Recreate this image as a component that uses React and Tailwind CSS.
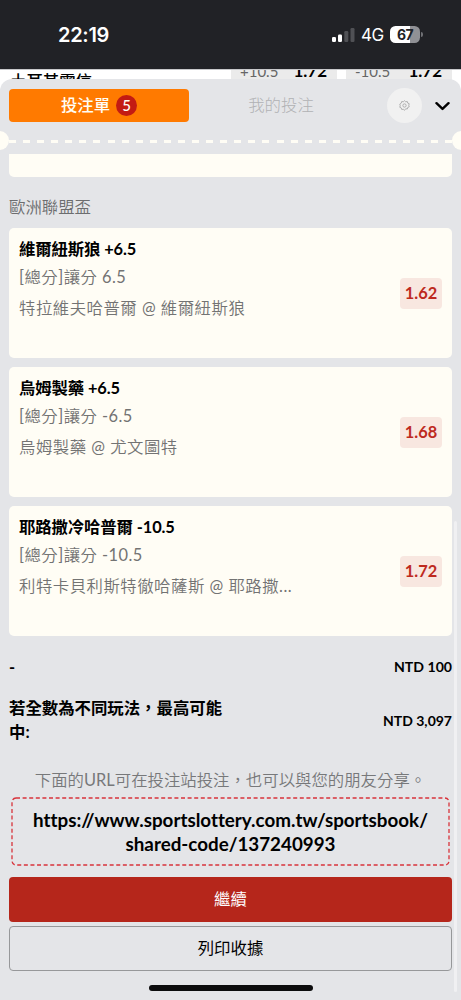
import React from "react";

const bets = [
  {
    id: 1,
    pick: "維爾紐斯狼 +6.5",
    market: "[總分]讓分 6.5",
    match: "特拉維夫哈普爾 @ 維爾紐斯狼",
    odds: "1.62",
  },
  {
    id: 2,
    pick: "烏姆製藥 +6.5",
    market: "[總分]讓分 -6.5",
    match: "烏姆製藥 @ 尤文圖特",
    odds: "1.68",
  },
  {
    id: 3,
    pick: "耶路撒冷哈普爾 -10.5",
    market: "[總分]讓分 -10.5",
    match: "利特卡貝利斯特徹哈薩斯 @ 耶路撒...",
    odds: "1.72",
  },
];

// Demi-light Chinese, with the Latin runs kept at regular weight
const SoftText = ({ children }) => (
  <span className="font-[350]">
    {children.split(/([\x20-\x7e]+)/).map((part, i) =>
      i % 2 ? (
        <span key={i} className="font-normal">
          {part}
        </span>
      ) : (
        part
      )
    )}
  </span>
);

const StatusBar = () => (
  <div className="relative z-20 h-[69px] shrink-0 bg-[#212226] text-white font-['Inter','Noto_Sans_CJK_TC',sans-serif]">
    <div className="flex h-[69px] items-center pl-[58px] pr-[38px]">
      <span className="text-[20px] font-semibold leading-6 tracking-[-0.3px]">22:19</span>
      <div className="ml-auto flex items-center">
        <svg width="24" height="16" viewBox="0 0 24 16">
          <rect x="0" y="10" width="4" height="5" rx="1.2" fill="#fff" />
          <rect x="6" y="7.5" width="4" height="7.5" rx="1.2" fill="#fff" />
          <rect x="12.3" y="4" width="4" height="11" rx="1.2" fill="#505155" />
          <rect x="18.5" y="1" width="4" height="14" rx="1.2" fill="#505155" />
        </svg>
        <span className="ml-[5px] w-[24px] text-[17px] leading-5 tracking-[-0.6px]">4G</span>
        <div className="ml-[5px] flex h-[17px] w-[30px] items-center justify-center rounded-[5.5px] bg-[linear-gradient(90deg,#fff_67%,#909195_67%)]">
          <span className="text-[14px] font-bold leading-none tracking-[-0.6px] text-[#212226]">67</span>
        </div>
        <div className="ml-[1px] h-[5px] w-[2px] rounded-r-full bg-[#707175]" />
      </div>
    </div>
  </div>
);

const OddsCell = ({ spread, odds }) => (
  <div className="flex w-[106px] items-start justify-between bg-[#ebebeb] pl-[9px] pr-[10px] leading-5">
    <span className="-mt-[9px] text-[15px] text-[#666]">{spread}</span>
    <span className="-mt-[9px] text-[17px] font-bold text-black">{odds}</span>
  </div>
);

const PageBehind = () => (
  <div className="flex h-[24px] shrink-0 overflow-hidden border-t border-[#c8c9cb] bg-white">
    <span className="ml-[10px] mt-[1px] text-[16.4px] font-medium leading-5 text-black">土耳其電信</span>
    <div className="ml-auto mr-[9px] flex gap-[9px]">
      <OddsCell spread="+10.5" odds="1.72" />
      <OddsCell spread="-10.5" odds="1.72" />
    </div>
  </div>
);

const Tabs = () => (
  <div className="flex h-[33px] items-center">
    <button className="ml-[9px] flex h-[33px] w-[180px] items-center justify-center rounded-[4px] bg-[#ff7a00] text-[16.4px] font-medium text-[#fffdf5]">
      投注單
      <span className="ml-[6px] flex h-[21px] w-[21px] items-center justify-center rounded-full bg-[#c31b13] text-[15px]">
        5
      </span>
    </button>
    <button className="w-[184px] text-center text-[16.4px] font-light text-[#b1b2b4]">我的投注</button>
    <button className="ml-[14px] flex h-[35px] w-[35px] items-center justify-center rounded-full bg-[#f1f1f1]">
      <svg width="11" height="11" viewBox="0 0 24 24" fill="none" stroke="#aaa" strokeWidth="2">
        <path d="M12 1.5l2.6 2.4 3.5-.6.9 3.4 3.3 1.4-1 3.4 1 3.4-3.3 1.4-.9 3.4-3.5-.6L12 22.500l-2.6-2.400-3.500.6-.9-3.400-3.300-1.400 1-3.400-1-3.400L5 6.700l.9-3.400 3.500.6z" />
        <circle cx="12" cy="12" r="3.600" />
      </svg>
    </button>
    <button className="ml-[13px]">
      <svg width="15" height="10" viewBox="0 0 15 10" fill="none" stroke="#000" strokeWidth="2.400" strokeLinecap="round" strokeLinejoin="round">
        <path d="M1.500 2.200L7.500 7.900L13.500 2.200" />
      </svg>
    </button>
  </div>
);

const Perforation = () => (
  <div className="mt-[9px] flex h-[19px] items-center overflow-hidden">
    <div className="-ml-[10px] h-[19px] w-[19px] shrink-0 rounded-full bg-[#fffdf5]" />
    <div className="mt-[2px] h-[3px] flex-1 bg-[repeating-linear-gradient(90deg,#fffdf5_0,#fffdf5_7px,transparent_7px,transparent_14.08px)]" />
    <div className="-mr-[10px] h-[19px] w-[19px] shrink-0 rounded-full bg-[#fffdf5]" />
  </div>
);

const BetCard = ({ bet }) => (
  <div className="flex h-[129.500px] items-center rounded-[5px] bg-[#fffdf5] px-[10px]">
    <div className="flex h-full flex-1 flex-col pt-[9px]">
      <h3 className="h-[24px] text-[16.4px] font-bold leading-[24px] tracking-[-0.12px] text-black">{bet.pick}</h3>
      <p className="mt-[3px] h-[26px] text-[16.4px] leading-[26px] tracking-[0.45px] text-[#737373]">
        <SoftText>{bet.market}</SoftText>
      </p>
      <p className="mt-[5px] h-[26px] whitespace-nowrap text-[16.4px] leading-[26px] tracking-[0.5px] text-[#737373]">
        <SoftText>{bet.match}</SoftText>
      </p>
    </div>
    <span className="mt-[1px] flex h-[31px] w-[42px] items-center justify-center rounded-[4px] bg-[#f8e7e0] text-[16.4px] font-bold text-[#be2a1e]">
      {bet.odds}
    </span>
  </div>
);

const App = () => {
  return (
    <div
      lang="zh-TW"
      className="relative flex h-[1000px] w-[461px] flex-col overflow-hidden bg-white font-['Lato','Noto_Sans_CJK_TC',sans-serif]"
    >
      <StatusBar />
      <PageBehind />

      <div className="relative z-10 -mt-[14px] flex flex-1 flex-col rounded-t-[12px] bg-[#e4e5e8] pt-[10px]">
        <Tabs />
        <Perforation />

        <div className="mt-[4px] px-[9px]">
          <div className="h-[22.500px] rounded-b-[5px] bg-[#fffdf5]" />
          <h2 className="mt-[18.500px] h-[24px] text-[16.4px] leading-[24px] text-[#6c6d6f]">
            <SoftText>歐洲聯盟盃</SoftText>
          </h2>

          <div className="mt-[9px] flex flex-col gap-[9.500px]">
            {bets.map((bet) => (
              <BetCard key={bet.id} bet={bet} />
            ))}
          </div>

          <div className="mt-[20.500px] flex h-[22px] items-center justify-between font-bold text-black">
            <span className="text-[16.4px]">-</span>
            <span className="text-[14.1px]">NTD 100</span>
          </div>

          <div className="mt-[18px] flex items-center justify-between font-bold text-black">
            <span className="w-[220px] text-[16.4px] leading-[24px]">若全數為不同玩法，最高可能中:</span>
            <span className="mt-[1px] text-[14px]">NTD 3,097</span>
          </div>

          <p className="mt-[24px] h-[24px] text-center text-[16.4px] leading-[24px] text-[#77787a]">
            <SoftText>下面的URL可在投注站投注，也可以與您的朋友分享。</SoftText>
          </p>

          <div className="relative mx-[2px] mt-[5px] h-[69px] pt-[11px] text-center text-[18.8px] font-bold leading-[24px] text-black [font-variant-ligatures:none]">
            <svg className="absolute inset-0" width="439" height="69" viewBox="0 0 439 69" fill="none">
              <rect x="1" y="1" width="437" height="67" rx="4" stroke="#d8333b" strokeWidth="1.300" strokeDasharray="4 2.600" />
            </svg>
            https://www.sportslottery.com.tw/sportsbook/
            <br />
            shared-code/137240993
          </div>

          <button className="mt-[11px] flex h-[45px] w-full items-center justify-center rounded-[4px] bg-[#b5261b] text-[16.4px] text-white">
            繼續
          </button>
          <button className="mt-[4px] flex h-[45px] w-full items-center justify-center rounded-[4px] border border-[#97989a] text-[16.4px] text-black">
            列印收據
          </button>
        </div>

        <div className="mx-auto mt-[14px] h-[6px] w-[164px] rounded-full bg-[#0c0c0d]" />
        <div className="absolute right-[4px] top-[442px] h-[471px] w-[3px] rounded-full bg-[#f0f0f2]" />
      </div>
    </div>
  );
};

export default App;
